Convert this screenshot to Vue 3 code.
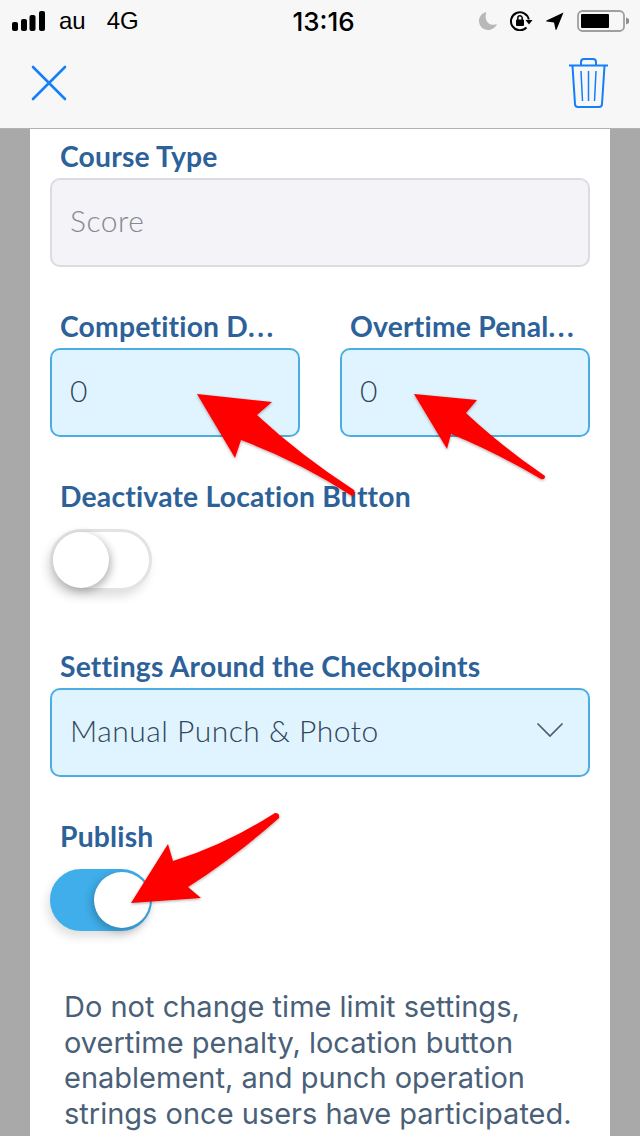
<template>
  <div class="screen">
    <header class="nav">
      <div class="status">
        <div class="status-left">
          <svg class="signal" viewBox="0 0 33 20" width="33" height="20">
            <rect x="0" y="11" width="6" height="9" rx="2" />
            <rect x="9" y="8" width="6" height="12" rx="2" />
            <rect x="17.500" y="4" width="6" height="16" rx="2" />
            <rect x="27" y="0" width="6" height="20" rx="2" />
          </svg>
          <span class="carrier">au</span>
          <span class="network">4G</span>
        </div>
        <div class="clock">13:16</div>
        <div class="status-right">
          <svg viewBox="0 0 18 18" width="18" height="18">
            <path d="M7.500 0C3 1 0 4.500 0 9c0 5 4 9 9 9 4 0 7.500-2.500 9-6-1 .5-2.500.8-4 .8C8 12.800 5 6 7.500 0z" fill="#b8b8b8" />
          </svg>
          <svg viewBox="0 0 23 20" width="23" height="20">
            <path d="M16.500 16.500A9 9 0 1 1 18.800 8.500" fill="none" stroke="#000" stroke-width="2" />
            <path d="M15.500 9h7l-3.500 4.500z" fill="#000" />
            <rect x="6" y="8.500" width="8" height="6.500" rx="1" fill="#000" />
            <path d="M7.800 9V7a2.200 2.200 0 0 1 4.400 0v2" fill="none" stroke="#000" stroke-width="1.500" />
          </svg>
          <svg viewBox="0 0 18 18" width="18" height="18">
            <path d="M17.500.5L.5 8.500c-.6.400-.4 1 .2 1.100L8 10.500l1.500 7c.2.600.8.700 1.100.1z" fill="#000" />
          </svg>
          <svg viewBox="0 0 52 22" width="52" height="22">
            <rect x="1" y="1" width="46" height="20" rx="4.500" fill="none" stroke="#9f9f9f" stroke-width="1.800" />
            <rect x="4" y="4" width="28" height="14" rx="1" fill="#000" />
            <path d="M49 7.500l3 1.500v4l-3 1.500z" fill="#8f8f8f" />
          </svg>
        </div>
      </div>
      <div class="toolbar">
        <svg viewBox="0 0 36 36" width="36" height="36">
          <path d="M2 2l32 32M34 2L2 34" fill="none" stroke="#147efb" stroke-width="2.600" stroke-linecap="round" />
        </svg>
        <svg viewBox="0 0 40 50" width="40" height="50">
          <path d="M0 7.500h39" stroke="#147efb" stroke-width="2" fill="none" />
          <path d="M12 7V4a3 3 0 0 1 3-3h9a3 3 0 0 1 3 3v3" stroke="#147efb" stroke-width="2" fill="none" />
          <path d="M3.500 8l2.500 38a3 3 0 0 0 3 3h21a3 3 0 0 0 3-3l2.500-38" stroke="#147efb" stroke-width="2" fill="none" />
          <path d="M12 13l1.500 30M19.500 13v30M27 13l-1.500 30" stroke="#147efb" stroke-width="1.500" fill="none" />
        </svg>
      </div>
    </header>

    <main class="card">
      <div class="label">Course Type</div>
      <div class="input readonly">Score</div>

      <div class="two-col">
        <div>
          <div class="label">Competition D<span class="dots">...</span></div>
          <div class="input">0</div>
        </div>
        <div>
          <div class="label">Overtime Penal<span class="dots">...</span></div>
          <div class="input">0</div>
        </div>
      </div>

      <div class="label spaced">Deactivate Location Button</div>
      <div class="toggle"><span class="knob"></span></div>

      <div class="label after-toggle">Settings Around the Checkpoints</div>
      <div class="input select">
        <span>Manual Punch &amp; Photo</span>
        <svg viewBox="0 0 28 16" width="28" height="16">
          <path d="M1.500 1.500L14 14 26.500 1.500" fill="none" stroke="#4d5d6e" stroke-width="1.700" />
        </svg>
      </div>

      <div class="label spaced">Publish</div>
      <div class="toggle on"><span class="knob"></span></div>

      <p class="note">
        Do not change time limit settings,<br />
        overtime penalty, location button<br />
        enablement, and punch operation<br />
        strings once users have participated.
      </p>
    </main>

    <!-- annotation arrows over the screenshot -->
    <svg class="arrows" viewBox="0 0 640 1136" width="640" height="1136">
      <defs>
        <filter id="arrow-shadow" x="-20%" y="-20%" width="140%" height="140%">
          <feDropShadow dx="0" dy="1" stdDeviation="1.500" flood-color="#000" flood-opacity="0.35" />
        </filter>
      </defs>
      <g fill="#fe0000" filter="url(#arrow-shadow)">
        <path v-for="a in arrows" :key="a" :d="a" />
      </g>
    </svg>
  </div>
</template>

<script setup>
const arrows = [
  'M197 394L272 402 257 415Q300 455 354 490 356 494 352 496 300 462 241 440L235 458Z',
  'M414 394L477 400 466 413Q500 445 545 476 545 480 541 479 495 452 451 434L447 449Z',
  'M131 903L168 844 173 861Q225 845 275 813 280 813 279 818 235 857 188 887L201 898Z'
]
</script>

<style scoped>
.screen {
  position: relative;
  width: 640px;
  height: 1136px;
  overflow: hidden;
  background: #a9a9a9;
  font-family: Lato, "Noto Sans", sans-serif;
}

.nav {
  height: 128px;
  background: #f7f7f7;
  border-bottom: 1px solid #b2b2b2;
}

.status {
  height: 42px;
  display: grid;
  grid-template-columns: 1fr auto 1fr;
  align-items: center;
  padding: 0 11px 0 12px;
  font-family: "Liberation Sans", sans-serif;
  color: #000;
}

.status-left {
  display: flex;
  align-items: center;
}

.signal {
  fill: #000;
}

.carrier {
  font-size: 24px;
  margin-left: 14px;
}

.network {
  font-size: 24px;
  margin-left: 21px;
}

.clock {
  margin-left: 6px;
  font-family: Inter, sans-serif;
  font-size: 26px;
  font-weight: 500;
}

.status-right {
  display: flex;
  align-items: center;
  justify-content: flex-end;
  gap: 13px;
}

.toolbar {
  display: flex;
  justify-content: space-between;
  align-items: center;
  height: 86px;
  box-sizing: border-box;
  padding: 0 31px 4px;
}

.card {
  margin: 0 30px;
  padding: 10px 20px 0;
  height: 1007px;
  box-sizing: border-box;
  background: #fff;
}

.label {
  height: 38.500px;
  line-height: 34px;
  padding-left: 10px;
  font-size: 28.300px;
  font-weight: 700;
  letter-spacing: 0.2px;
  color: #2c6199;
  white-space: nowrap;
}

.dots {
  letter-spacing: 2.500px;
}

.spaced {
  margin-top: 42.500px;
}

.after-toggle {
  margin-top: 58px;
}

.input {
  display: flex;
  align-items: center;
  height: 89px;
  box-sizing: border-box;
  padding: 0 18px 4px;
  border: 2px solid #4aaee3;
  border-radius: 10px;
  background: #dff4fe;
  font-size: 30px;
  font-weight: 300;
  letter-spacing: 0.5px;
  color: #33455a;
}

.readonly {
  border-color: #dcdce0;
  background: #f3f3f8;
  color: #85898f;
}

.select {
  justify-content: space-between;
  padding-right: 24px;
}

.two-col {
  display: grid;
  grid-template-columns: 1fr 1fr;
  gap: 40px;
  margin-top: 42.500px;
}

.toggle {
  position: relative;
  width: 102px;
  height: 62px;
  margin-top: 11.500px;
  box-sizing: border-box;
  border: 3px solid #e3e3e3;
  border-radius: 31px;
  background: #fff;
  box-shadow: -3px 6px 10px rgba(0, 0, 0, 0.12);
}

.knob {
  position: absolute;
  left: 0;
  top: 0;
  width: 56px;
  height: 56px;
  border-radius: 50%;
  background: #fff;
  box-shadow: 2px 3px 8px rgba(0, 0, 0, 0.3);
}

.toggle.on {
  border-color: #3faeea;
  background: #3faeea;
}

.toggle.on .knob {
  left: 41px;
  box-shadow: -2px 3px 8px rgba(0, 0, 0, 0.25);
}

.note {
  margin: 58px 0 0;
  padding-left: 14px;
  font-family: Inter, sans-serif;
  font-size: 29px;
  line-height: 35.700px;
  color: #4a5f78;
  white-space: nowrap;
}

.arrows {
  position: absolute;
  left: 0;
  top: 0;
  pointer-events: none;
}
</style>
